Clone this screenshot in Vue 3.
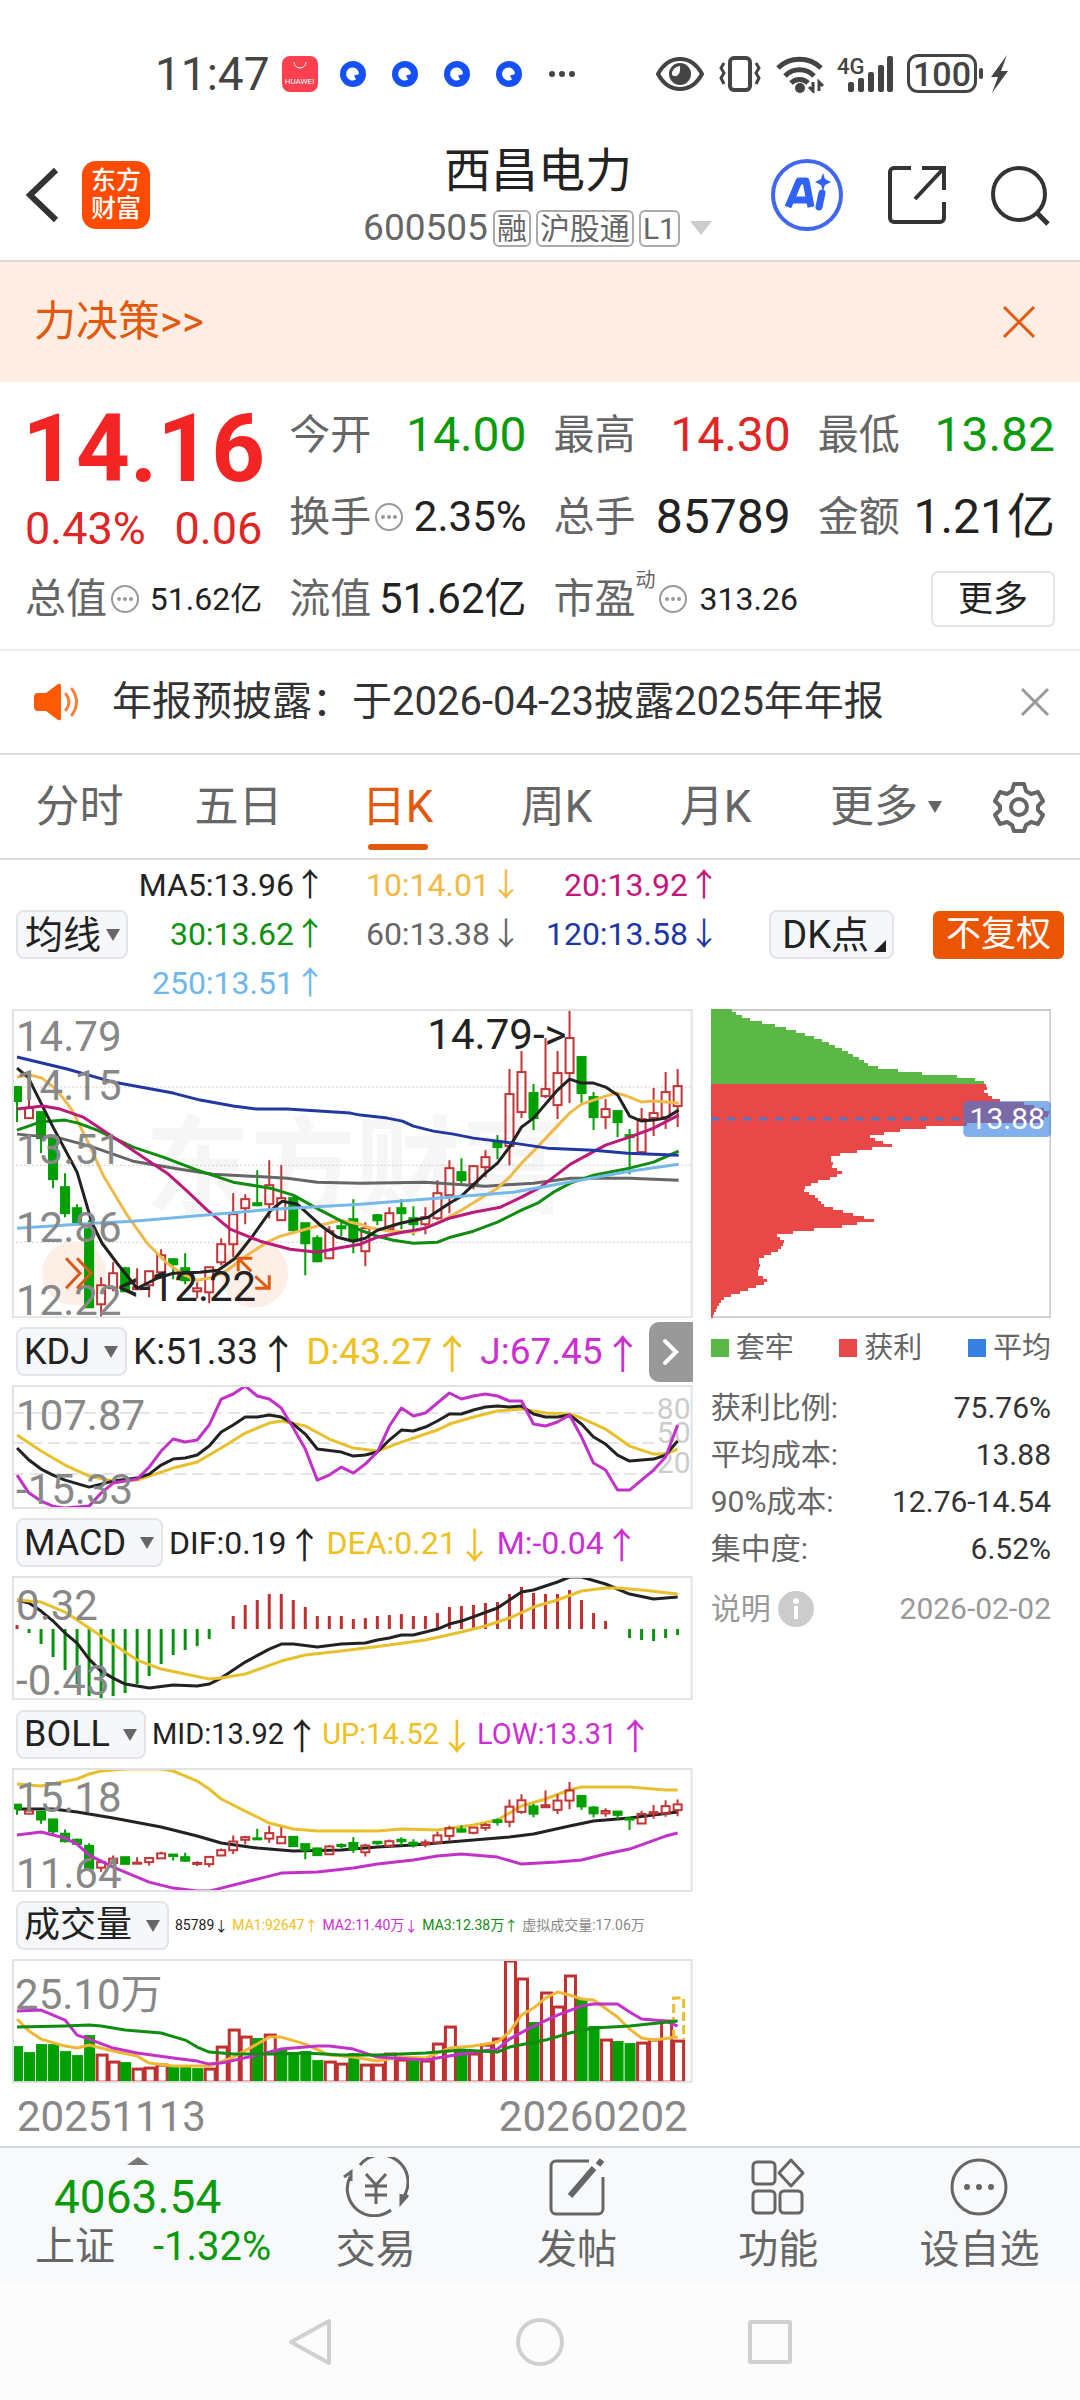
<script setup>
const STEP = 12
const x = (i) => 5 + STEP * i
const toPoints = (list) => list.trim().split(/\s+/).map((p) => {
  const [i, y] = p.split(',').map(Number)
  return `${x(i)},${y}`
}).join(' ')

const quotes = [
  { label: '今开', value: '14.00', tone: 'down' },
  { label: '最高', value: '14.30', tone: 'up' },
  { label: '最低', value: '13.82', tone: 'down' },
  { label: '换手', value: '2.35%', hint: true, size: 'mid' },
  { label: '总手', value: '85789' },
  { label: '金额', value: '1.21亿' },
  { label: '总值', value: '51.62亿', hint: true, size: 'small' },
  { label: '流值', value: '51.62亿', size: 'mid' },
  { label: '市盈', sup: '动', value: '313.26', hint: true, size: 'small', start: true }
]

const tabs = ['分时', '五日', '日K', '周K', '月K']

const averages = [
  ['MA5:13.96', '↑', '#222222'], ['10:14.01', '↓', '#f5b942'], ['20:13.92', '↑', '#c4157c'],
  ['30:13.62', '↑', '#0a930a'], ['60:13.38', '↓', '#666666'], ['120:13.58', '↓', '#1c36a8'],
  ['250:13.51', '↑', '#6cb8ee']
]

// colour, then x,y pairs in chart units
const maLines = [
  ['#666666', '5,125 48,129 81,138 121,152 168,160 201,165 275,169 305,173 348,174 413,173 473,177 488,176 521,174 558,169 617,169 666,171'],
  ['#f0ba4a', '5,68 18,66 30,69 45,81 60,101 75,131 91,166 115,206 135,234 155,254 171,265 185,271 201,268 215,261 235,246 255,233 268,227 308,216 328,211 348,215 355,218 378,222 401,223 425,214 449,201 465,191 485,179 497,168 509,154 521,142 538,124 557,104 569,95 593,87 605,84 617,88 629,93 641,92 666,94'],
  ['#108c10', '5,121 28,113 53,111 66,114 85,121 121,138 151,148 185,161 221,173 258,179 281,186 308,201 331,213 348,221 365,227 381,231 401,234 425,233 438,228 461,222 485,213 509,201 525,194 541,183 558,174 581,166 617,159 641,153 666,142'],
  ['#222222', '5,59 16,68 41,118 65,163 80,214 90,234 105,254 125,279 145,269 161,264 188,263 206,261 223,249 241,226 258,202 270,192 285,195 308,216 325,228 341,232 353,229 365,221 388,214 416,208 437,194 449,187 473,164 485,154 497,138 509,118 521,109 545,81 557,70 569,74 581,74 593,78 605,86 617,107 629,112 641,111 653,109 666,101'],
  ['#bb1a7a', '5,100 31,97 48,100 71,108 98,126 131,148 155,164 175,182 195,201 218,220 248,232 278,240 305,243 325,239 348,235 365,228 390,223 413,219 437,209 461,203 488,198 509,188 528,178 541,168 558,155 593,136 617,128 641,119 666,106'],
  ['#2238a0', '5,48 55,60 101,73 161,84 188,91 221,97 245,100 275,100 338,104 348,106 375,109 390,112 401,117 421,122 441,125 461,129 501,134 535,139 581,141 615,144 666,146'],
  ['#74b9e8', '5,219 81,214 121,212 261,200 348,195 437,188 501,183 545,175 617,162 666,155']
]

// direction, high, body top, body bottom, low
const candles = `
g,78,78,92,113 r,89,99,109,109 g,103,103,129,144 g,129,129,170,179 g,164,178,204,208 g,195,199,213,215 g,211,220,298,298
r,268,276,295,309 r,253,264,279,282 g,258,259,282,282 r,259,278,280,280 r,262,262,276,288 r,240,246,263,265 g,249,250,255,270
g,244,259,271,275 r,273,279,282,289 r,258,258,283,294 r,229,235,253,256 r,184,205,235,248 r,185,190,199,215 g,161,194,196,197
r,151,176,195,209 r,156,189,211,211 g,187,189,221,221 g,214,214,234,266 g,226,229,252,253 r,217,222,249,250 g,211,217,219,227
g,190,210,231,244 r,213,219,242,257 g,205,206,211,216 r,198,204,220,223 g,190,199,204,220 g,197,209,215,226 r,198,208,215,225
r,171,184,209,211 r,151,159,186,204 g,149,163,171,174 r,156,157,175,180 r,141,148,158,168 g,126,132,138,150 r,60,85,137,156
r,42,63,103,109 g,75,84,109,121 r,29,80,87,89 r,42,64,96,110 r,0,29,64,94 g,48,48,84,96 g,83,88,108,121
r,90,100,108,120 g,102,102,113,128 g,120,126,128,165 r,99,110,143,144 r,79,104,109,127 r,63,83,108,120 r,60,77,97,118`
  .trim().split(/\s+/).map((row, i) => {
    const [dir, ...v] = row.split(',')
    const [high, top, bottom, low] = v.map(Number)
    return { i, up: dir === 'r', high, top, bottom, low }
  })

const bollY = (y) => 14 + y * 0.29
const bollCandles = candles.map((c) => ({
  ...c, high: bollY(c.high), top: bollY(c.top), bottom: bollY(c.bottom), low: bollY(c.low)
}))

const kdj = {
  D: toPoints('0,50 2,66 4,80 6,91 8,96 10,95 13,83 15,77 17,63 19,48 21,38 22,36 24,41 26,54 28,63 30,66 32,57 35,45 36,39 38,32 40,26 42,24 44,28 46,29 47,33 49,44 51,61 53,69 54,69 55,64'),
  K: toPoints('0,63 1,75 2,84 3,90 4,95 6,102 8,96 10,93 11,89 12,80 13,74 14,73 15,70 16,61 17,47 18,40 19,32 20,32 21,30 22,32 23,39 24,49 25,64 27,67 28,71 29,70 30,67 31,55 32,45 33,46 34,42 35,36 36,29 37,29 38,25 39,22 40,21 41,22 42,21 43,29 44,32 45,32 46,30 47,39 48,52 49,59 50,70 51,76 53,74 54,70 55,56'),
  J: toPoints('0,90 1,108 2,116 3,121 4,123 6,121 7,108 8,98 10,94 11,82 12,66 13,54 14,57 15,55 16,40 17,14 18,9 19,1 20,11 21,14 22,23 23,43 24,64 25,95 26,90 27,82 28,88 29,79 30,67 31,41 32,23 33,31 34,28 35,18 36,8 37,14 38,11 39,9 40,11 41,16 42,16 43,39 44,41 45,37 46,30 47,52 48,78 49,85 50,105 51,105 53,85 54,72 55,40')
}

const ZERO = 53
const macdBars = [49, 57, 68, 81, 94, 108, 120, 124, 120, 117, 108, 100, 88, 79, 74, 70, 63, 53, 40, 29, 24, 18, 18, 24, 31, 40, 40, 40, 43, 42, 40, 39, 38, 40, 40, 37, 31, 30, 29, 27, 26, 18, 11, 17, 18, 18, 14, 24, 37, 45, 53, 62, 64, 65, 62, 59]
const dif = toPoints('0,24 1,27 2,35 3,45 4,57 5,67 6,83 7,95 8,102 9,108 11,112 13,109 15,110 16,108 17,102 18,94 19,86 21,73 22,68 23,68 25,71 27,68 29,67 30,64 31,62 32,59 33,59 35,53 36,48 37,45 40,32 41,24 42,16 43,14 45,6 46,1 47,1 49,8 51,18 53,23 55,21')
const dea = toPoints('0,24 2,26 4,36 6,52 8,68 10,84 12,93 14,98 16,103 17,102 19,98 22,85 24,79 27,75 31,69 34,64 37,56 39,50 41,42 43,31 45,24 47,15 49,12 50,12 52,14 55,18')

const boll = {
  up: toPoints('0,16 2,18 5,11 6,6 7,3 9,1 12,1 13,3 15,13 16,21 17,31 19,43 21,55 23,61 25,63 30,63 32,61 35,62 38,57 40,52 42,38 44,31 46,22 47,19 51,19 54,22 55,22'),
  mid: toPoints('0,41 3,41 5,44 8,50 12,59 15,68 17,75 20,80 23,83 27,82 30,79 33,77 35,75 38,72 41,69 43,66 46,58 48,53 51,50 55,44'),
  low: toPoints('0,67 2,64 4,70 5,76 6,87 8,99 11,114 13,120 15,123 16,123 17,120 20,111 22,105 25,104 28,100 30,96 33,92 35,88 37,86 40,89 42,96 45,94 47,92 49,86 51,81 54,68 55,65')
}

const volumeTops = [87, 93, 85, 85, 92, 96, 76, 95, 102, 103, 109, 108, 105, 107, 108, 109, 109, 87, 70, 77, 79, 75, 90, 93, 92, 101, 102, 104, 94, 105, 105, 94, 100, 101, 101, 84, 67, 90, 94, 85, 79, 1, 19, 63, 33, 47, 16, 40, 67, 80, 82, 84, 83, 80, 61, 81]
const fallDays = new Set([0, 1, 2, 3, 4, 5, 6, 9, 13, 14, 15, 20, 22, 23, 24, 25, 28, 33, 37, 43, 47, 48, 50, 51])
const volMa = {
  one: toPoints('0,60 1,72 2,80 4,87 5,89 6,86 8,92 10,97 11,104 13,107 16,107 18,98 20,85 21,78 22,78 24,85 26,96 28,98 30,102 32,98 34,99 36,89 38,87 40,83 41,73 42,56 43,49 44,39 45,33 46,36 47,40 48,41 50,58 51,70 52,79 53,81 55,78'),
  two: toPoints('0,52 2,51 4,61 5,76 6,80 8,89 10,94 13,99 15,102 16,105 17,104 20,96 22,90 25,87 26,87 28,90 30,98 34,101 35,99 37,95 40,90 41,80 43,67 45,56 47,47 48,45 50,45 51,53 52,60 54,62 55,67'),
  three: toPoints('0,68 4,67 6,66 7,67 9,71 12,74 14,81 15,88 16,93 18,95 22,95 24,94 27,96 30,96 34,94 37,91 40,93 41,88 44,81 46,74 48,69 51,67 55,62')
}

// holding profile: width at each height, sampled into thin rows
const profile = '19,0 28,6 39,10 68,17 101,27 118,34 133,41 148,49 159,56 171,59 211,64 258,68 273,73 277,78 273,82 281,88 289,91 313,94 333,100 340,104 329,112 256,115 226,117 194,120 173,124 159,127 166,131 181,136 161,139 146,142 129,145 117,149 123,153 119,156 131,163 123,168 103,173 91,180 104,187 113,196 128,201 146,206 163,211 146,214 131,217 93,221 66,226 74,233 67,241 51,248 46,251 49,255 46,264 57,272 48,276 32,282 14,288 8,294 1,309'
  .split(' ').map((p) => p.split(',').map(Number))
const chipRows = Array.from({ length: 103 }, (_, k) => {
  const y = k * 3
  const n = Math.max(1, profile.findIndex((p) => p[1] > y + 1))
  const [w0, y0] = profile[n - 1]
  const [w1, y1] = profile[n]
  return { y, w: Math.round(w0 + ((w1 - w0) * (y + 1 - y0)) / (y1 - y0)) }
})

const costs = [
  ['获利比例:', '75.76%'], ['平均成本:', '13.88'], ['90%成本:', '12.76-14.54'], ['集中度:', '6.52%']
]
</script>

<template>
  <div class="app">
    <div class="status">
      <div class="status-left">
        <span class="clock">11:47</span>
        <span class="store"><svg width="14" height="8" viewBox="0 0 14 8"><path d="M1 0a6 6 0 0 0 12 0" fill="none" stroke="#fff" stroke-width="1" /></svg>HUAWEI</span>
        <svg v-for="n in 4" :key="n" class="bubble" width="26" height="26" viewBox="0 0 26 26"><circle cx="13" cy="13" r="13" fill="#1450f5" /><path d="M13 6.500a6.500 6.500 0 1 0 3 12l-2-4 4-1 1-1A6.500 6.500 0 0 0 13 6.500z" fill="#fff" /></svg>
        <svg width="28" height="8" viewBox="0 0 28 8" fill="#444"><circle cx="4" cy="4" r="3" /><circle cx="14" cy="4" r="3" /><circle cx="24" cy="4" r="3" /></svg>
      </div>
      <div class="status-right">
        <svg width="48" height="34" viewBox="0 0 48 34"><path d="M2 17C8 6 15 2 24 2s16 4 22 15c-6 11-13 15-22 15S8 28 2 17z" fill="none" stroke="#444" stroke-width="4" /><circle cx="24" cy="17" r="11" fill="#444" /><path d="M24 9a8 8 0 0 0-8 9c4 3 9 0 8-9z" fill="#fff" /></svg>
        <svg width="46" height="38" viewBox="0 0 46 38" fill="none" stroke="#444" stroke-width="4"><rect x="13" y="3" width="20" height="32" rx="4" /><path d="M7 8l-3 5 3 5-3 5 3 6M39 8l3 5-3 5 3 5-3 6" stroke-width="3" /></svg>
        <svg width="50" height="38" viewBox="0 0 50 38" fill="none" stroke="#444" stroke-width="5"><path d="M2 13a31 31 0 0 1 43 0M9 21a20 20 0 0 1 29 0M15 28a12 12 0 0 1 17 0" /><circle cx="24" cy="33" r="5" fill="#444" stroke="none" /><path d="M37 27v9l-4-4M43 36v-9l4 4" stroke-width="3" /></svg>
        <div class="signal"><span>4G</span><svg width="46" height="36" viewBox="0 0 46 36" fill="#444"><rect x="0" y="26" width="6" height="10" rx="2" /><rect x="10" y="22" width="6" height="14" rx="2" /><rect x="20" y="16" width="6" height="20" rx="2" /><rect x="30" y="9" width="6" height="27" rx="2" /><rect x="39" y="0" width="6" height="36" rx="2" /></svg></div>
        <div class="battery"><span>100</span></div>
        <svg width="20" height="38" viewBox="0 0 20 38" fill="#444"><path d="M17 0L1 22h7L2 38l16-22h-7z" /></svg>
      </div>
    </div>

    <header class="header">
      <div class="side">
        <button aria-label="返回"><svg width="36" height="58" viewBox="0 0 36 58"><path d="M32 4L6 29l26 25" fill="none" stroke="#333" stroke-width="6" /></svg></button>
        <span class="brand">东方<br>财富</span>
      </div>
      <div class="title">
        <h1>西昌电力</h1>
        <div class="code">
          <span>600505</span><span class="tag">融</span><span class="tag">沪股通</span><span class="tag">L1</span>
          <svg width="24" height="16" viewBox="0 0 24 16"><path d="M1 1h22L12 15z" fill="#ccc" /></svg>
        </div>
      </div>
      <div class="side tools">
        <button aria-label="AI"><svg width="74" height="74" viewBox="0 0 74 74"><circle cx="37" cy="37" r="34" fill="none" stroke="#3f68ee" stroke-width="4" /><path d="M18 49L29 23h7l5 26M22 42h17" fill="none" stroke="#2f62f5" stroke-width="7" stroke-linejoin="round" /><path d="M52 35l-3 14" stroke="#2f62f5" stroke-width="7" stroke-linecap="round" /><path d="M53 15l2 6 6 3-6 3-2 6-2-6-6-3 6-3z" fill="#2f62f5" /></svg></button>
        <button aria-label="分享"><svg width="60" height="60" viewBox="0 0 60 60" fill="none" stroke="#333" stroke-width="4"><path d="M24 3H7a4 4 0 0 0-4 4v46a4 4 0 0 0 4 4h46a4 4 0 0 0 4-4V37M35 3h22v22M57 3L28 34" /></svg></button>
        <button aria-label="搜索"><svg width="62" height="62" viewBox="0 0 62 62" fill="none" stroke="#333" stroke-width="4"><circle cx="29" cy="30" r="26" /><path d="M47 49l11 11" stroke-width="5" /></svg></button>
      </div>
    </header>

    <section class="banner">
      <a href="#">力决策&gt;&gt;</a>
      <button aria-label="关闭"><svg width="34" height="34" viewBox="0 0 34 34"><path d="M2 2l30 30M32 2L2 32" stroke="#e2580c" stroke-width="3" /></svg></button>
    </section>

    <section class="quote">
      <div class="last up">
        <strong>14.16</strong>
        <div><span>0.43%</span><span>0.06</span></div>
      </div>
      <div v-for="q in quotes" :key="q.label" class="cell" :class="{ start: q.start }">
        <span class="name">{{ q.label }}<sup v-if="q.sup">{{ q.sup }}</sup></span>
        <svg v-if="q.hint" width="30" height="30" viewBox="0 0 30 30"><circle cx="15" cy="15" r="13" fill="none" stroke="#999" stroke-width="2" /><g fill="#999"><circle cx="9" cy="15" r="2" /><circle cx="15" cy="15" r="2" /><circle cx="21" cy="15" r="2" /></g></svg>
        <span class="value" :class="[q.tone, q.size]">{{ q.value }}</span>
      </div>
      <div class="cell end"><button class="more">更多</button></div>
    </section>

    <section class="notice">
      <svg width="46" height="38" viewBox="0 0 46 38"><path d="M4 10h8L24 1q3-1 3 2v32q0 3-3 2L12 28H4q-4 0-4-4V14q0-4 4-4z" fill="#ff5a00" /><path d="M32 11q6 8 0 16M38 6q9 13 0 26" fill="none" stroke="#ff7d3a" stroke-width="3" stroke-linecap="round" /></svg>
      <p>年报预披露：于2026-04-23披露2025年年报</p>
      <button aria-label="关闭公告"><svg width="30" height="30" viewBox="0 0 30 30"><path d="M2 2l26 26M28 2L2 28" stroke="#999" stroke-width="3" /></svg></button>
    </section>

    <nav class="tabs">
      <button v-for="t in tabs" :key="t" :class="{ active: t === '日K' }">{{ t }}</button>
      <button class="wide">更多<svg width="16" height="14" viewBox="0 0 16 14"><path d="M1 1h14L8 13z" fill="#666" /></svg></button>
      <button class="gear" aria-label="设置"><svg width="52" height="52" viewBox="0 0 52 52" fill="none" stroke="#666" stroke-width="4" stroke-linejoin="round"><path d="M21 3h10l2 7 5 3 7-2 5 9-5 5v4l5 5-5 9-7-2-5 3-2 6H21l-2-6-5-3-7 2-5-9 5-5v-4l-5-5 5-9 7 2 5-3z" /><circle cx="26" cy="26" r="8" /></svg></button>
    </nav>

    <section class="averages">
      <div class="picker"><select aria-label="均线"><option>均线</option></select></div>
      <div class="ma-list">
        <span v-for="[text, arrow, color] in averages" :key="text" :style="{ color }">{{ text }}<i>{{ arrow }}</i></span>
      </div>
      <button class="chip">DK点<svg width="12" height="12" viewBox="0 0 12 12"><path d="M12 0v12H0z" fill="#222" /></svg></button>
      <button class="solid">不复权</button>
    </section>

    <main class="board">
      <div class="charts">
        <svg class="plot" viewBox="0 0 680 309">
          <text class="watermark" x="133" y="195">东方财富</text>
          <path d="M0 78h680M0 156h680M0 233h680" stroke="#ccc" stroke-width="1" stroke-dasharray="2 2" />
          <circle cx="62" cy="264" r="32" fill="#fdeee6" />
          <circle cx="242" cy="264" r="34" fill="#fdeee6" />
          <g v-for="c in candles" :key="c.i" :class="c.up ? 'rise' : 'fall'">
            <path :d="`M${x(c.i)} ${c.high}V${c.top}M${x(c.i)} ${c.bottom}V${c.low}`" />
            <rect :x="x(c.i) - 4" :y="c.top" width="8" :height="Math.max(1, c.bottom - c.top)" />
          </g>
          <polyline v-for="[color, points] in maLines" :key="color" class="line" :stroke="color" :points="points" />
          <g class="axis"><text x="4" y="42">14.79</text><text x="4" y="91">14.15</text><text x="4" y="155">13.51</text><text x="4" y="233">12.86</text><text x="4" y="306">12.22</text></g>
          <path d="M54 249l14 15-14 15M65 249l14 15-14 15" fill="none" stroke="#d95a18" stroke-width="3" />
          <path d="M239 262l-13-13M226 262v-13h14M243 267l13 12M243 279h14v-13" fill="none" stroke="#e05c14" stroke-width="3" />
          <text class="mark" x="244" y="292" text-anchor="end">&lt;-12.22</text>
          <text class="mark" x="554" y="40" text-anchor="end">14.79-&gt;</text>
          <rect class="frame" x="1" y="1" width="678" height="307" />
        </svg>

        <div class="legend">
          <div class="picker"><select aria-label="指标一"><option>KDJ</option></select></div>
          <div class="figures">
            <span>K:51.33<i>↑</i></span><span class="gold">D:43.27<i>↑</i></span><span class="violet">J:67.45<i>↑</i></span>
          </div>
          <button class="next" aria-label="展开"><svg width="18" height="28" viewBox="0 0 18 28"><path d="M3 3l11 11L3 25" fill="none" stroke="#fff" stroke-width="4" stroke-linecap="round" /></svg></button>
        </div>
        <svg class="plot" viewBox="0 0 680 124">
          <path d="M0 28h645M0 58h645M0 89h645" stroke="#ccc" stroke-width="1" stroke-dasharray="12 6" />
          <g class="scale" text-anchor="end"><text x="678" y="34">80</text><text x="678" y="58">50</text><text x="678" y="88">20</text></g>
          <polyline class="line" stroke="#e8c02c" :points="kdj.D" />
          <polyline class="line" stroke="#222" :points="kdj.K" />
          <polyline class="line" stroke="#c231c8" :points="kdj.J" />
          <g class="axis"><text x="4" y="45">107.87</text><text x="4" y="119">-15.33</text></g>
          <rect class="frame" x="1" y="1" width="678" height="122" />
        </svg>

        <div class="legend">
          <div class="picker"><select aria-label="指标二"><option>MACD</option></select></div>
          <div class="figures snug">
            <span>DIF:0.19<i>↑</i></span><span class="gold">DEA:0.21<i>↓</i></span><span class="violet">M:-0.04<i>↑</i></span>
          </div>
        </div>
        <svg class="plot" viewBox="0 0 680 124">
          <path v-for="(y, i) in macdBars" :key="i" :d="`M${x(i)} ${ZERO}V${y}`" :stroke="y < ZERO ? '#c03030' : '#08930c'" stroke-width="3" />
          <polyline class="line" stroke="#222" :points="dif" />
          <polyline class="line" stroke="#e8c02c" :points="dea" />
          <g class="axis"><text x="4" y="44">0.32</text><text x="4" y="119">-0.43</text></g>
          <rect class="frame" x="1" y="1" width="678" height="122" />
        </svg>

        <div class="legend">
          <div class="picker"><select aria-label="指标三"><option>BOLL</option></select></div>
          <div class="figures tight">
            <span>MID:13.92<i>↑</i></span><span class="gold">UP:14.52<i>↓</i></span><span class="violet">LOW:13.31<i>↑</i></span>
          </div>
        </div>
        <svg class="plot" viewBox="0 0 680 124">
          <polyline class="line" stroke="#e8c02c" :points="boll.up" />
          <polyline class="line" stroke="#222" :points="boll.mid" />
          <g v-for="c in bollCandles" :key="c.i" :class="c.up ? 'rise' : 'fall'">
            <path :d="`M${x(c.i)} ${c.high}V${c.top}M${x(c.i)} ${c.bottom}V${c.low}`" />
            <rect :x="x(c.i) - 4" :y="c.top" width="8" :height="Math.max(1, c.bottom - c.top)" />
          </g>
          <polyline class="line" stroke="#c231c8" :points="boll.low" />
          <g class="axis"><text x="4" y="44">15.18</text><text x="4" y="120">11.64</text></g>
          <rect class="frame" x="1" y="1" width="678" height="122" />
        </svg>

        <div class="legend">
          <div class="picker"><select aria-label="指标四"><option>成交量</option></select></div>
          <div class="figures tiny">
            <span>85789<i>↓</i></span><span class="gold">MA1:92647<i>↑</i></span><span class="violet">MA2:11.40万<i>↓</i></span><span class="green">MA3:12.38万<i>↑</i></span><span class="grey">虚拟成交量:17.06万</span>
          </div>
        </div>
        <svg class="plot" viewBox="0 0 680 124">
          <text class="axis" x="3" y="50">25.10万</text>
          <g v-for="(top, i) in volumeTops" :key="i">
            <rect v-if="fallDays.has(i)" :x="x(i) - 5" :y="top" width="11" :height="124 - top" fill="#00a000" />
            <rect v-else :x="x(i) - 4" :y="top + 1" width="10" :height="122 - top" fill="#fff" stroke="#c03030" stroke-width="3" />
          </g>
          <path d="M661 80V39h10v41" fill="none" stroke="#e8c02c" stroke-width="3" stroke-dasharray="9 4" />
          <polyline class="line" stroke="#f0b832" :points="volMa.one" />
          <polyline class="line" stroke="#c231c8" :points="volMa.two" />
          <polyline class="line" stroke="#108c10" :points="volMa.three" />
          <rect class="frame" x="1" y="1" width="678" height="122" />
        </svg>
        <div class="dates"><time>20251113</time><time>20260202</time></div>
      </div>

      <aside class="holding">
        <svg class="plot" viewBox="0 0 340 309">
          <rect x="1" y="1" width="338" height="307" fill="none" stroke="#ccc" stroke-width="2" />
          <rect v-for="r in chipRows" :key="r.y" x="0" :y="r.y" :width="r.w" height="3" :fill="r.y < 75 ? '#5bb845' : '#e84848'" shape-rendering="crispEdges" />
          <path d="M0 110h254" stroke="#4f78c8" stroke-width="3" stroke-dasharray="8 8" />
          <rect x="252" y="92" width="88" height="36" rx="5" fill="#3580e0" fill-opacity=".62" />
          <text class="avg" x="296" y="120" text-anchor="middle">13.88</text>
        </svg>
        <ul class="keys">
          <li><b class="k-green"></b>套牢</li><li><b class="k-red"></b>获利</li><li><b class="k-blue"></b>平均</li>
        </ul>
        <dl>
          <div v-for="[k, v] in costs" :key="k"><dt>{{ k }}</dt><dd>{{ v }}</dd></div>
        </dl>
        <div class="about">
          <a href="#">说明<svg width="36" height="36" viewBox="0 0 36 36"><circle cx="18" cy="18" r="18" fill="#ccc" /><circle cx="18" cy="10" r="3" fill="#fff" /><path d="M18 15v13" stroke="#fff" stroke-width="4" /></svg></a>
          <time>2026-02-02</time>
        </div>
      </aside>
    </main>

    <nav class="dock">
      <div class="index">
        <svg width="22" height="8" viewBox="0 0 22 8"><path d="M11 0l11 8H0z" fill="#777" /></svg>
        <strong>4063.54</strong>
        <div><span>上证</span><em>-1.32%</em></div>
      </div>
      <button>
        <svg width="66" height="60" viewBox="0 0 66 60" fill="none" stroke="#666" stroke-width="3"><path d="M17 8a27 27 0 0 1 42 34M48 53A27 27 0 0 1 7 20M1 20l7-5v9M65 38l-7 8v-9" /><path d="M23 17l10 11 10-11M22 29h22M22 38h22M33 28v19" /></svg>交易
      </button>
      <button>
        <svg width="60" height="60" viewBox="0 0 60 60" fill="none" stroke="#666" stroke-width="3"><path d="M42 4H9a5 5 0 0 0-5 5v43a5 5 0 0 0 5 5h42a5 5 0 0 0 5-5V20" /><path d="M23 39L47 11" stroke-width="6" /><path d="M51 8l4-5" stroke-width="6" /></svg>发帖
      </button>
      <button>
        <svg width="60" height="60" viewBox="0 0 60 60" fill="none" stroke="#666" stroke-width="3"><rect x="5" y="5" width="22" height="22" rx="4" /><rect x="5" y="34" width="22" height="22" rx="4" /><rect x="32" y="34" width="22" height="22" rx="4" /><path d="M43 3l12 13-12 13-12-13z" stroke-linejoin="round" /></svg>功能
      </button>
      <button>
        <svg width="60" height="60" viewBox="0 0 60 60"><circle cx="30" cy="30" r="27" fill="none" stroke="#666" stroke-width="3" /><g fill="#666"><circle cx="18" cy="30" r="3" /><circle cx="30" cy="30" r="3" /><circle cx="42" cy="30" r="3" /></g></svg>设自选
      </button>
    </nav>

    <div class="keysbar">
      <svg width="48" height="50" viewBox="0 0 48 50"><path d="M43 4v42L5 25z" /></svg>
      <svg width="50" height="50" viewBox="0 0 50 50"><circle cx="25" cy="25" r="22" /></svg>
      <svg width="48" height="50" viewBox="0 0 48 50"><rect x="4" y="5" width="40" height="40" rx="1" /></svg>
    </div>
  </div>
</template>

<style>
body { background: #fff; }
</style>

<style scoped>
* { box-sizing: border-box; margin: 0; padding: 0; }
.app { font-family: Roboto, "Noto Sans CJK SC", sans-serif; color: #222; background: #fff; line-height: 1; }
button, select { font: inherit; color: inherit; background: none; border: 0; line-height: 1; }
button { display: inline-flex; align-items: center; justify-content: center; white-space: nowrap; }
a { color: inherit; text-decoration: none; }
svg { display: block; flex: none; }
i, em { font-style: normal; }
.up { color: #e02525; }
.down { color: #0a9a0a; }

.status { display: flex; justify-content: space-between; align-items: center; height: 130px; padding: 17px 70px 0 155px; color: #444; }
.status-left { display: flex; align-items: center; }
.status-right { display: flex; align-items: center; gap: 13px; }
.clock { font-size: 46px; margin-right: 12px; }
.store { display: flex; flex-direction: column; align-items: center; justify-content: center; gap: 8px; width: 36px; height: 36px; margin-right: 22px; border-radius: 8px; background: #fb4150; color: #fff; font-size: 8px; }
.bubble { margin-right: 26px; }
.signal { position: relative; padding-left: 9px; }
.signal span { position: absolute; left: -2px; top: 0; font-size: 22px; font-weight: 500; }
.battery { position: relative; display: flex; align-items: center; justify-content: center; width: 70px; height: 39px; border: 3px solid #444; border-radius: 11px; font-size: 34px; font-weight: 500; }
.battery::after { content: ""; position: absolute; right: -9px; top: 11px; width: 4px; height: 11px; border-radius: 2px; background: #444; }

.header { display: grid; grid-template-columns: 1fr auto 1fr; align-items: center; height: 132px; padding: 0 28px 0 24px; border-bottom: 2px solid #d8d8d8; }
.side { display: flex; align-items: center; gap: 22px; }
.tools { justify-content: flex-end; gap: 43px; }
.brand { display: grid; place-content: center; width: 68px; height: 68px; border-radius: 14px; background: #ff4b00; color: #fff; font-size: 25px; font-weight: 500; line-height: 28px; }
.title { display: flex; flex-direction: column; align-items: center; gap: 10px; }
h1 { font-size: 47px; font-weight: 400; line-height: 56px; }
.code { display: flex; align-items: center; gap: 5px; color: #666; font-size: 37px; line-height: 38px; }
.tag { padding: 0 2px; border: 2px solid #aaa; border-radius: 6px; font-size: 30px; line-height: 33px; }
.code svg { margin-left: 4px; }

.banner { display: flex; align-items: center; justify-content: space-between; height: 120px; padding: 0 44px 0 34px; background: #fdede3; color: #e2580c; font-size: 42px; }

.quote { display: grid; grid-template-columns: repeat(4, minmax(0, 1fr)); grid-auto-rows: 82px; column-gap: 27px; padding: 12px 25px 9px; border-bottom: 2px solid #eee; }
.last { grid-row: span 2; padding-top: 4px; }
.last strong { display: flex; justify-content: center; font-size: 94px; line-height: 102px; font-weight: 700; color: #f22424; }
.last div { display: flex; justify-content: space-between; font-size: 45px; line-height: 58px; }
.cell { display: flex; align-items: center; font-size: 41px; white-space: nowrap; }
.cell:nth-child(n+8) { order: 1; }
.name { position: relative; color: #666; margin-right: 3px; }
.value { margin-left: auto; font-size: 48px; }
.value.mid { font-size: 42px; }
.value.small { font-size: 32px; }
.start .value { margin-left: 12px; }
.start .name { margin-right: 22px; }
sup { position: absolute; left: 100%; top: -9px; font-size: 20px; }
.end { justify-content: flex-end; }
.more { width: 124px; height: 56px; border: 2px solid #e4e4e4; border-radius: 7px; font-size: 35px; }

.notice { display: flex; align-items: center; height: 104px; padding: 0 30px 0 34px; border-bottom: 2px solid #ddd; color: #333; }
.notice p { flex: 1; margin-left: 32px; font-size: 40px; white-space: nowrap; }

.tabs { display: flex; height: 105px; padding-right: 20px; border-bottom: 2px solid #ddd; color: #666; font-size: 44px; }
.tabs button { position: relative; flex: 159 0 0; }
.tabs .wide { flex: 183 0 0; gap: 9px; }
.tabs .gear { flex: 82 0 0; }
.tabs .active { color: #e2580c; }
.active::after { content: ""; position: absolute; bottom: 8px; left: 50%; width: 60px; height: 6px; margin-left: -30px; border-radius: 3px; background: #e2580c; }

.averages { display: flex; align-items: center; height: 149px; padding: 0 16px; }
.picker { position: relative; }
.picker select, .chip { height: 49px; padding: 0 34px 0 6px; border: 2px solid #e2e4e8; border-radius: 8px; background: #f6f7fa; font-size: 36px; appearance: none; }
.picker::after { content: ""; position: absolute; right: 9px; top: 19px; border: 7px solid transparent; border-top: 12px solid #666; border-bottom: 0; pointer-events: none; }
.averages .picker select { padding: 0 24px 0 7px; font-size: 38px; }
.averages .picker::after { right: 8px; }
.ma-list { display: grid; grid-template-columns: 198px 196px 198px; margin-right: auto; font-size: 32px; line-height: 49px; text-align: right; white-space: nowrap; }
i { font-family: "Noto Sans CJK SC", sans-serif; line-height: 1; }
.averages .chip { gap: 5px; padding: 0 6px 0 11px; margin-right: 39px; font-size: 38px; }
.chip svg { align-self: flex-end; margin-bottom: 5px; }
.solid { height: 48px; padding: 0 13px; border-radius: 6px; background: #ea5504; color: #fff; font-size: 35px; }

.board { display: grid; grid-template-columns: minmax(0, 2fr) minmax(0, 1fr); column-gap: 18px; padding: 0 29px 0 12px; }
.plot { width: 100%; height: auto; }
.frame { fill: none; stroke: #e2e2e2; stroke-width: 2; }
.line { fill: none; stroke-width: 3; stroke-linejoin: round; }
.axis { fill: #888; font-size: 42px; }
.scale { fill: #ccc; font-size: 30px; }
.mark { fill: #222; font-size: 42px; }
.watermark { fill: #f6f6f6; font-size: 105px; font-weight: 700; }
.avg { fill: #fff; font-size: 30px; }
.rise { fill: none; stroke: #c03535; stroke-width: 2; }
.fall { fill: #00a000; stroke: #00a000; stroke-width: 2; }

.legend { display: flex; align-items: center; height: 67px; padding-left: 4px; }
.figures { display: flex; flex: 1; align-items: center; gap: 8px; margin-left: 6px; font-size: 37px; white-space: nowrap; }
.figures span { display: flex; align-items: center; }
.figures i { font-size: 40px; }
.figures.snug { gap: 4px; font-size: 32px; }
.figures.tight { gap: 2px; font-size: 29px; }
.snug i, .tight i { font-size: 36px; }
.figures.tiny { gap: 4px; font-size: 14px; }
.tiny i { font-size: 14px; }
.gold { color: #f0c020; }
.violet { color: #cc2ed2; }
.green { color: #108c10; }
.grey { color: #888; }
.next { width: 44px; height: 60px; border-radius: 10px 0 0 10px; background: #999; }
.dates { display: flex; justify-content: space-between; padding: 4px 5px 0; color: #888; font-size: 42px; line-height: 59px; }

.keys { display: flex; justify-content: space-between; list-style: none; margin-top: 10px; font-size: 29px; line-height: 40px; color: #666; }
.keys li { display: flex; align-items: center; gap: 7px; }
.keys b { width: 18px; height: 18px; }
.k-green { background: #5bb845; }
.k-red { background: #e84848; }
.k-blue { background: #3580e0; }
dl { margin-top: 16px; }
dl div { display: flex; justify-content: space-between; font-size: 30px; line-height: 47px; white-space: nowrap; }
dt { color: #666; }
dd { color: #333; }
.about { display: flex; justify-content: space-between; align-items: center; margin-top: 13px; font-size: 30px; line-height: 47px; color: #999; }
.about a { display: flex; align-items: center; gap: 7px; }

.dock { display: grid; grid-template-columns: 275fr repeat(4, 201fr); height: 136px; border-top: 2px solid #d3d6dc; background: #f7f9fb; color: #666; }
.dock button { flex-direction: column; gap: 10px; font-size: 40px; line-height: 46px; justify-content: flex-start; padding-top: 9px; }
.index { display: flex; flex-direction: column; align-items: center; padding-top: 9px; }
.index strong { margin-top: 8px; font-size: 46px; line-height: 48px; font-weight: 400; color: #0a9a0a; }
.index div { display: flex; align-items: center; gap: 38px; font-size: 40px; line-height: 52px; padding-left: 35px; align-self: flex-start; }
.index em { color: #0a9a0a; }

.keysbar { display: flex; align-items: center; justify-content: center; gap: 181px; height: 120px; background: #fcfcfc; }
.keysbar svg { fill: none; stroke: #d0d0d0; stroke-width: 4; stroke-linejoin: round; }
</style>
